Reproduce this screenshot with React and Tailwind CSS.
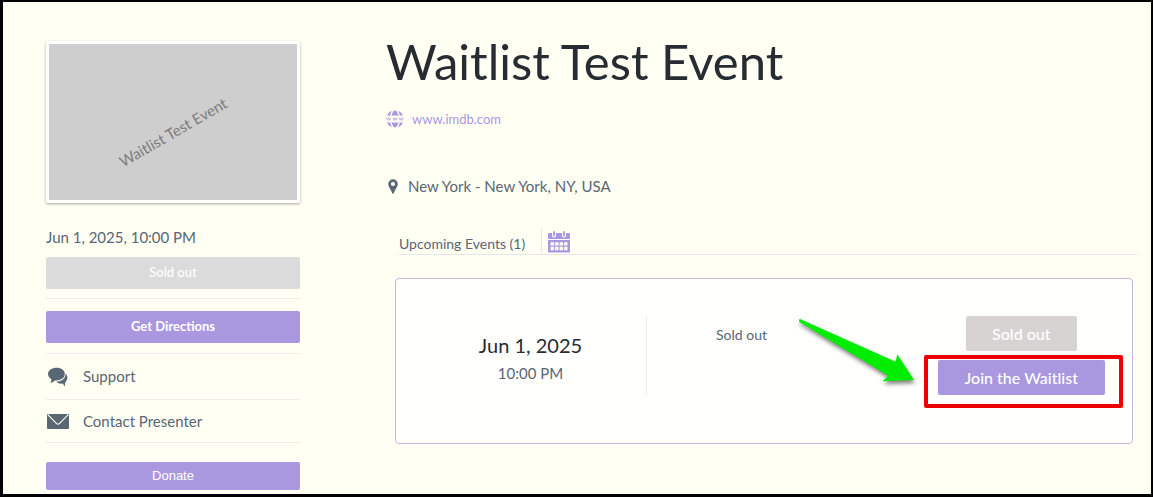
function GlobeIcon() {
  return (
    <svg className="size-[18px] shrink-0 text-[#a998df]" viewBox="0 0 18 18" fill="none" aria-hidden="true">
      <defs>
        <clipPath id="globe-caps">
          <path d="M0 0H18V5.6H0ZM0 12.4H18V18H0Z" />
        </clipPath>
      </defs>
      <g clipPath="url(#globe-caps)">
        <circle cx="9" cy="9" r="8.8" fill="currentColor" />
        <ellipse cx="9" cy="9" rx="4.4" ry="9.4" stroke="#fffff3" strokeWidth="1.4" />
      </g>
      <path
        d="M0.5 7.6l1.1 2.8 1.1-2.8 1.1 2.8 1.1-2.8M6.8 7.6l1.1 2.8 1.1-2.8 1.1 2.8 1.1-2.8M13.1 7.6l1.1 2.8 1.1-2.8 1.1 2.8 1.1-2.8"
        stroke="currentColor"
        strokeWidth="0.7"
      />
    </svg>
  );
}

function PinIcon() {
  return (
    <svg className="h-[15px] w-[10px] shrink-0 text-[#596673]" viewBox="0 0 10 15" fill="currentColor" aria-hidden="true">
      <path
        fillRule="evenodd"
        d="M5 0.3A4.8 4.8 0 0 0 0.2 5.1C0.2 8 3.2 11 4.3 14.2Q5 15.2 5.7 14.2C6.8 11 9.8 8 9.8 5.1A4.8 4.8 0 0 0 5 0.3ZM5 2.9A2.1 2.1 0 1 1 5 7.1A2.1 2.1 0 0 1 5 2.9Z"
      />
    </svg>
  );
}

function CalendarIcon() {
  return (
    <svg className="h-[22px] w-[22px]" viewBox="0 0 22 22" aria-hidden="true">
      <path fill="#a998df" d="M0 3.4Q0 2 1.4 2H20.6Q22 2 22 3.4V8H0ZM0 9H22V20.4Q22 21.6 20.8 21.6H1.2Q0 21.6 0 20.4Z" />
      <path d="M6 1.6V4.6M16 1.6V4.6" stroke="#fffff3" strokeWidth="4" strokeLinecap="round" />
      <path d="M6 1V4.4M16 1V4.4" stroke="#a998df" strokeWidth="1.8" strokeLinecap="round" />
      <path
        fill="#fffff3"
        d="M2.6 11.2h3.4v3.4h-3.4zM7.1 11.2h3.4v3.4h-3.4zM11.6 11.2h3.4v3.4h-3.4zM16.1 11.2h3.4v3.4h-3.4zM2.6 15.8h3.4v3.4h-3.4zM7.1 15.8h3.4v3.4h-3.4zM11.6 15.8h3.4v3.4h-3.4zM16.1 15.8h3.4v3.4h-3.4z"
      />
    </svg>
  );
}

function ChatIcon() {
  return (
    <svg className="h-5 w-[22px] shrink-0 text-[#596673]" viewBox="0 0 22 20" fill="currentColor" aria-hidden="true">
      <path d="M9.6 0.8C4.8 0.8 1 3.5 1 7.1C1 9.2 2.4 11 4.4 12.2C4.4 13.4 4.1 14.6 3.4 15.8C5.4 15.4 6.8 14.6 8 13.4C13.6 13.9 17.8 11.1 17.8 7.1C17.8 3.5 14.4 0.8 9.6 0.8Z" />
      <path d="M18.6 6.6C18.9 11 15.2 14.6 9 14.8C11 16.4 13.6 17 16 16.5C16.6 17.7 17 18.6 17.6 19.8C17.9 18.2 18 16.8 18.2 15.4C20.9 13.2 21.2 9.2 18.6 6.6Z" />
    </svg>
  );
}

function MailIcon() {
  return (
    <svg className="h-[15px] w-[22px] shrink-0 text-[#596673]" viewBox="0 0 22 15" aria-hidden="true">
      <rect width="22" height="15" rx="1" fill="currentColor" />
      <path d="M0.8 0.6L9.6 9.6Q11 10.8 12.4 9.6L21.2 0.6" fill="none" stroke="#fffff3" strokeWidth="1.2" />
    </svg>
  );
}

function SidebarButton({ children, className, disabled }) {
  return (
    <button type="button" disabled={disabled} className={`w-full rounded-xs text-[13px] text-white ${className}`}>
      {children}
    </button>
  );
}

function Sidebar() {
  return (
    <aside className="flex w-[254px] shrink-0 flex-col pt-[39px]">
      <div className="flex h-[162px] items-center justify-center rounded-xs border-3 border-white bg-[#cecece] shadow-[0_1px_3px_rgba(0,0,0,0.35)]">
        <span className="mt-5 -rotate-30 text-[15px] leading-5 text-[#7d7d7d]">Waitlist Test Event</span>
      </div>
      <p className="mt-6 text-[15px] leading-5 text-[#596673]">Jun 1, 2025, 10:00 PM</p>
      <SidebarButton disabled className="mt-[10px] h-8 bg-[#dbdbdb] font-medium">Sold out</SidebarButton>
      <div className="mt-[9px] border-y border-[#ececec] pt-3 pb-[10px]">
        <SidebarButton className="h-8 bg-[#a998df] font-bold">Get Directions</SidebarButton>
      </div>
      <a href="#support" className="flex h-[46px] items-center gap-[14px] border-b border-[#ececec] pl-px text-[15px] text-[#596673]">
        <ChatIcon />
        Support
      </a>
      <a href="#contact" className="flex h-[43px] items-center gap-[14px] border-b border-[#ececec] pl-px text-[15px] text-[#596673]">
        <MailIcon />
        Contact Presenter
      </a>
      <SidebarButton className="mt-[19px] h-7 bg-[#a998df] font-['Liberation_Sans',sans-serif]">Donate</SidebarButton>
    </aside>
  );
}

function Arrow() {
  return (
    <svg
      className="absolute -top-[46px] right-[184px] h-[75px] w-[126px] drop-shadow-[1px_3px_2px_rgba(0,0,0,0.5)]"
      viewBox="0 0 126 75"
      aria-hidden="true"
    >
      <path fill="#00ec00" d="M5 5L100.7 47.7L102.3 40.3L119 66L87.7 67.3L93.3 61.7L4.3 8Q3.5 5.5 5 5Z" />
    </svg>
  );
}

function EventCard() {
  return (
    <article className="mt-[23px] mr-1 ml-[9px] flex rounded border border-[#c0bbda] bg-[#fffffe] pt-[37px] pb-[48px]">
      <div className="flex w-[251px] flex-col items-center border-r border-[#ececec] pt-[15px] pl-[19px] pb-2">
        <h2 className="text-xl leading-7 text-[#262c31]">Jun 1, 2025</h2>
        <p className="text-[15px] leading-7 text-[#596673]">10:00 PM</p>
      </div>
      <p className="flex-1 pt-[9px] pl-[69px] text-sm leading-5 text-[#596673]">Sold out</p>
      <div className="mr-[27px] flex flex-col items-center gap-[9px]">
        <button type="button" disabled className="h-[35px] rounded-xs bg-[#d8d3d3] px-[26px] text-base font-medium text-white">
          Sold out
        </button>
        <div className="relative">
          <button type="button" className="h-[35px] rounded-xs bg-[#a998df] px-[27px] text-base font-medium text-white">
            Join the Waitlist
          </button>
          <div className="pointer-events-none absolute -top-[5px] -right-[18px] -bottom-[13px] -left-[14px] rounded-xs border-4 border-[#ee0000]" />
          <Arrow />
        </div>
      </div>
    </article>
  );
}

export default function App() {
  return (
    <div className="flex min-h-screen gap-[86px] border-t-2 border-r-2 border-b-[3px] border-l-[3px] border-black bg-[#fffff3] pr-[14px] pl-[43px] font-['Lato',sans-serif]">
      <Sidebar />
      <main className="min-w-0 flex-1 pt-[27px]">
        <h1 className="text-[49px] leading-[64px] text-[#262c31]">Waitlist Test Event</h1>
        <a href="https://www.imdb.com" className="mt-4 flex items-center gap-2 text-[13px] leading-5 text-[#a998df]">
          <GlobeIcon />
          www.imdb.com
        </a>
        <p className="mt-[47px] flex items-center gap-[10px] pl-[2px] text-[15px] leading-5 text-[#596673]">
          <PinIcon />
          New York - New York, NY, USA
        </p>
        <div className="mt-[33px] ml-[13px] flex h-[26px] border-b border-[#e6e6e6]">
          <span className="border-r border-[#e6e6e6] pt-[5px] pr-4 text-sm leading-5 text-[#596673]">Upcoming Events (1)</span>
          <button type="button" aria-label="Calendar" className="ml-[6px]">
            <CalendarIcon />
          </button>
        </div>
        <EventCard />
      </main>
    </div>
  );
}
